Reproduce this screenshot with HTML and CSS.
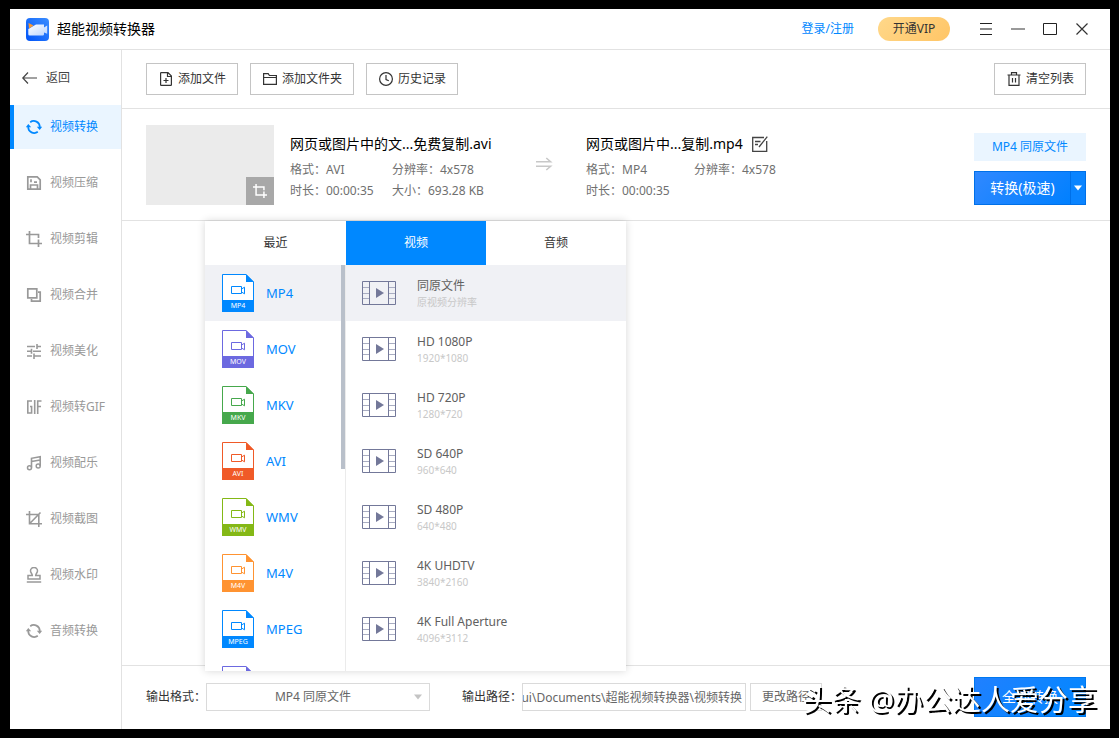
FILE: index.html
```html
<!DOCTYPE html>
<html lang="zh-CN">
<head>
<meta charset="utf-8">
<title>超能视频转换器</title>
<link rel="stylesheet" href="styles.css">
</head>
<body>
<svg class="sprite" aria-hidden="true">
  <symbol id="sync" viewBox="0 0 16 16"><path d="M4.200 3.200A6 6 0 0 1 13.800 8M11.800 12.800A6 6 0 0 1 2.200 8" fill="none" stroke="currentColor" stroke-width="1.700"/><path d="M-.2 8.200 2.300 5l2.900 3.200zM10.800 7.800h5.400L13.700 11z" fill="currentColor"/></symbol>
  <symbol id="save" viewBox="0 0 16 16"><path d="M1.800 1.800h9.400l3 3v9.400H1.800zM4.500 14v-4h7v4M5 4.300v3M8 7.200h3" fill="none" stroke="currentColor" stroke-width="1.700"/></symbol>
  <symbol id="crop" viewBox="0 0 16 16"><path d="M3.500 0v12.500H16M0 3.500h12.500V7M12.500 8.500V16" fill="none" stroke="currentColor" stroke-width="1.700"/></symbol>
  <symbol id="merge" viewBox="0 0 16 16"><path d="M1.800 1.800h9v9h-9zM12 5.200h2.200v9H5.500V12" fill="none" stroke="currentColor" stroke-width="1.700"/></symbol>
  <symbol id="tune" viewBox="0 0 16 16"><path d="M1 3.500h8M11 3.500h4M11 1v5M1 8.300h4M5.500 5.800v5M7 8.300h8M1 13h5M8 10.500V16M8 13h7" fill="none" stroke="currentColor" stroke-width="1.600"/></symbol>
  <symbol id="gif" viewBox="0 0 16 16"><path d="M6 2H1.800v12h3.800V7.500H4M8.700 1v14M11.700 15V2H15.500M11.700 7.500H15" fill="none" stroke="currentColor" stroke-width="1.600"/></symbol>
  <symbol id="music" viewBox="0 0 16 16"><path d="M5.500 12.500V3.300L14.200 1.800V11M5.500 6.500 14.200 5" fill="none" stroke="currentColor" stroke-width="1.600"/><circle cx="3.500" cy="12.700" r="2" fill="none" stroke="currentColor" stroke-width="1.500"/><circle cx="12.200" cy="11" r="2" fill="none" stroke="currentColor" stroke-width="1.500"/></symbol>
  <symbol id="snap" viewBox="0 0 16 16"><path d="M3.500 0v12.800H16M0 3.500h12.800V16M3.500 12.800 14.500 1.500" fill="none" stroke="currentColor" stroke-width="1.600"/></symbol>
  <symbol id="stamp" viewBox="0 0 16 16"><path d="M6.300 8.500C6.300 6.500 4.500 6 4.500 3.800a3.500 3.300 0 0 1 7 0C11.500 6 9.700 6.500 9.700 8.500H14v3.500H2V8.500zM.8 15h14.400" fill="none" stroke="currentColor" stroke-width="1.500"/></symbol>
  <symbol id="film" viewBox="0 0 34 24"><path d="M.5.5h33v23H.5zM7.500.5v23M26.500.5v23" fill="none" stroke="#737899"/><path d="M1 6.500h6M1 12.500h6M1 17.500h6M27 6.500h6M27 12.500h6M27 17.500h6" stroke="#a9adc2"/><path d="M14 7v10l8-5z" fill="#737899"/></symbol>
  <symbol id="doc" viewBox="0 0 32 38"><path d="M.5.5H24L31.500 8v29.500H.5z" fill="#fff" stroke="currentColor"/><path d="M24 0v8h8zM0 26h32v12H0z" fill="currentColor"/><path d="M9.500 12.500h10v7h-10zM19.500 15l3-1.800v6.600l-3-1.800" fill="none" stroke="currentColor"/></symbol>
</svg>

<div class="window">
  <header class="titlebar">
    <svg class="logo" viewBox="0 0 23 23"><defs><linearGradient id="lg" x1="1" y1="0" x2="0" y2="1"><stop offset="0" stop-color="#3b8dff"/><stop offset="1" stop-color="#0054f8"/></linearGradient><linearGradient id="cam" x1="0" y1="0" x2="1" y2="1"><stop offset="0" stop-color="#fff"/><stop offset="1" stop-color="#b9d4ff"/></linearGradient></defs><rect width="23" height="23" rx="4" fill="url(#lg)"/><path d="M2.300 11 10 6.500h8v3l3.200-2v8.300L18 14.500v1.700q0 1.300-1.300 1.300H3.600q-1.300 0-1.300-1.300z" fill="url(#cam)"/><path d="M2.500 5 7.500 7.500 3 10.500z" fill="#ff9b2e"/></svg>
    <h1 class="app-name">超能视频转换器</h1>
    <a class="login" href="#login">登录/注册</a>
    <button class="vip" type="button">开通VIP</button>
    <div class="window-controls">
      <button type="button" aria-label="菜单"><svg viewBox="0 0 14 14"><path d="M1 1.500h12M1 12.500h12" stroke="#222"/><path d="M1 7h12" stroke="#888" stroke-width="2"/></svg></button>
      <button type="button" aria-label="最小化"><svg viewBox="0 0 14 14"><path d="M0 7h14" stroke="#999" stroke-width="2"/></svg></button>
      <button type="button" aria-label="最大化"><svg viewBox="0 0 14 14"><path d="M.5 1.500h13v11H.5z" fill="none" stroke="#222"/></svg></button>
      <button type="button" aria-label="关闭"><svg viewBox="0 0 14 14"><path d="M1.500 1.500l11 11M12.500 1.500l-11 11" stroke="#333" stroke-width="1.200"/></svg></button>
    </div>
  </header>

  <div class="body">
    <nav class="sidebar">
      <a class="back" href="#back"><svg viewBox="0 0 16 16"><path d="M15 8H.8M6 2.500.8 8 6 13.500" fill="none" stroke="#444" stroke-width="1.200"/></svg>返回</a>
      <a class="nav-item active" href="#convert"><svg><use href="#sync"/></svg>视频转换</a>
      <a class="nav-item" href="#compress"><svg><use href="#save"/></svg>视频压缩</a>
      <a class="nav-item" href="#cut"><svg><use href="#crop"/></svg>视频剪辑</a>
      <a class="nav-item" href="#merge-video"><svg><use href="#merge"/></svg>视频合并</a>
      <a class="nav-item" href="#beautify"><svg><use href="#tune"/></svg>视频美化</a>
      <a class="nav-item" href="#to-gif"><svg><use href="#gif"/></svg>视频转GIF</a>
      <a class="nav-item" href="#soundtrack"><svg><use href="#music"/></svg>视频配乐</a>
      <a class="nav-item" href="#screenshot"><svg><use href="#snap"/></svg>视频截图</a>
      <a class="nav-item" href="#watermark"><svg><use href="#stamp"/></svg>视频水印</a>
      <a class="nav-item" href="#audio"><svg><use href="#sync"/></svg>音频转换</a>
    </nav>

    <main class="workspace">
      <div class="toolbar">
        <button class="tool" type="button"><svg viewBox="0 0 14 14"><path d="M9 .6H2.200q-.6 0-.6.6v11.600q0 .6.6.6h9.600q.6 0 .6-.6V4zM8.500.6V4.500h4M7 6v5M4.500 8.500h5" fill="none" stroke="#333" stroke-width="1.200"/></svg>添加文件</button>
        <button class="tool" type="button"><svg viewBox="0 0 14 14"><path d="M.6 12.400V1.600h4.600l1.200 1.900h7v8.900zM.6 5.500h12.800" fill="none" stroke="#333" stroke-width="1.200"/></svg>添加文件夹</button>
        <button class="tool" type="button"><svg viewBox="0 0 14 14"><circle cx="7" cy="7" r="6.400" fill="none" stroke="#333" stroke-width="1.200"/><path d="M7 3v4.500l2.800 1.200" fill="none" stroke="#333" stroke-width="1.200"/></svg>历史记录</button>
        <button class="tool clear" type="button"><svg viewBox="0 0 14 14"><path d="M.5 3h13M4.500 3V.7h5V3M2 3v10.400h10V3M5.500 6v4.500M8.500 6v4.500" fill="none" stroke="#333" stroke-width="1.200"/></svg>清空列表</button>
      </div>

      <article class="file">
        <div class="thumb"><button class="thumb-crop" type="button" aria-label="裁剪"><svg><use href="#crop"/></svg></button></div>
        <div class="info source">
          <h2>网页或图片中的文...免费复制.avi</h2>
          <div class="meta"><span>格式：AVI</span><span>分辨率：4x578</span><span>时长：00:00:35</span><span>大小：693.28 KB</span></div>
        </div>
        <svg class="arrow" viewBox="0 0 16 14"><path d="M0 4.700h14.500L10.300 1M0 9.300h14.500L10.300 13" fill="none" stroke="#c8c8c8" stroke-width="1.600"/></svg>
        <div class="info output">
          <h2>网页或图片中...复制.mp4 <button class="edit" type="button" aria-label="编辑"><svg viewBox="0 0 16 16"><path d="M12 1.500H.7v13.800h14V5M3 5.500h5.500M3 8.500h3M15.300.7 7 11" fill="none" stroke="#444" stroke-width="1.300"/></svg></button></h2>
          <div class="meta"><span>格式：MP4</span><span>分辨率：4x578</span><span>时长：00:00:35</span></div>
        </div>
        <div class="actions">
          <button class="preset" type="button">MP4 同原文件</button>
          <div class="split"><button class="convert" type="button">转换(极速)</button><button class="more" type="button" aria-label="更多"><svg viewBox="0 0 8 6"><path d="M0 .5h8L4 5.500z" fill="#fff"/></svg></button></div>
        </div>
      </article>

      <div class="list-space"></div>

      <footer class="footer">
        <label for="format">输出格式：</label>
        <div class="select-wrap"><select id="format"><option>MP4 同原文件</option></select><svg viewBox="0 0 8 6"><path d="M0 .5h8L4 5.500z" fill="#c4c4c4"/></svg></div>
        <label class="path-label" for="path">输出路径：</label>
        <input id="path" type="text" value="ui\Documents\超能视频转换器\视频转换">
        <button class="change" type="button">更改路径</button>
        <button class="convert-all" type="button">全部转换</button>
      </footer>

      <section class="picker" aria-label="输出格式选择">
        <div class="tabs"><button type="button">最近</button><button class="selected" type="button">视频</button><button type="button">音频</button></div>
        <div class="columns">
          <div class="formats">
            <button class="format on mp4" type="button"><span class="doc"><svg><use href="#doc"/></svg><small>MP4</small></span>MP4</button>
            <button class="format mov" type="button"><span class="doc"><svg><use href="#doc"/></svg><small>MOV</small></span>MOV</button>
            <button class="format mkv" type="button"><span class="doc"><svg><use href="#doc"/></svg><small>MKV</small></span>MKV</button>
            <button class="format avi" type="button"><span class="doc"><svg><use href="#doc"/></svg><small>AVI</small></span>AVI</button>
            <button class="format wmv" type="button"><span class="doc"><svg><use href="#doc"/></svg><small>WMV</small></span>WMV</button>
            <button class="format m4v" type="button"><span class="doc"><svg><use href="#doc"/></svg><small>M4V</small></span>M4V</button>
            <button class="format mp4" type="button"><span class="doc"><svg><use href="#doc"/></svg><small>MPEG</small></span>MPEG</button>
            <button class="format mov" type="button" aria-label="更多格式"><span class="doc"><svg><use href="#doc"/></svg></span></button>
            <div class="scroll-thumb"></div>
          </div>
          <div class="presets">
            <button class="quality on" type="button"><svg><use href="#film"/></svg><span class="words">同原文件<small>原视频分辨率</small></span></button>
            <button class="quality" type="button"><svg><use href="#film"/></svg><span class="words">HD 1080P<small>1920*1080</small></span></button>
            <button class="quality" type="button"><svg><use href="#film"/></svg><span class="words">HD 720P<small>1280*720</small></span></button>
            <button class="quality" type="button"><svg><use href="#film"/></svg><span class="words">SD 640P<small>960*640</small></span></button>
            <button class="quality" type="button"><svg><use href="#film"/></svg><span class="words">SD 480P<small>640*480</small></span></button>
            <button class="quality" type="button"><svg><use href="#film"/></svg><span class="words">4K UHDTV<small>3840*2160</small></span></button>
            <button class="quality" type="button"><svg><use href="#film"/></svg><span class="words">4K Full Aperture<small>4096*3112</small></span></button>
          </div>
        </div>
      </section>
    </main>
  </div>
</div>
<div class="stamp-text">头条 @办公达人爱分享</div>
</body>
</html>
```
FILE: styles.css
```css
* { box-sizing: border-box; }

body {
  margin: 0;
  height: 100vh;
  padding: 9px 9px 9px 10px;
  background: #000;
  color: #333;
  font: 12px/20px "Noto Sans", "Noto Sans CJK SC", sans-serif;
}

button, input, select {
  font: inherit;
  color: inherit;
  margin: 0;
  padding: 0;
  border: 0;
  border-radius: 0;
  background: none;
}

a { text-decoration: none; }
svg { display: block; flex: none; overflow: visible; }
h1, h2 { margin: 0; font-weight: 400; }
.sprite { position: absolute; width: 0; height: 0; }

.window { display: flex; flex-direction: column; height: 100%; background: #fff; }

.titlebar {
  display: flex;
  align-items: center;
  height: 41px;
  padding: 0 21px 0 16px;
  border-bottom: 1px solid #e2e2e2;
}
.logo { width: 23px; height: 23px; margin-right: 8px; }
.app-name { font-size: 14px; color: #000; margin-right: auto; }
.login { color: #0088ff; margin-right: 24px; }
.vip {
  width: 72px;
  height: 24px;
  margin-right: 29px;
  border-radius: 12px;
  background: linear-gradient(135deg, #ffd88a, #ffc566);
}
.window-controls { display: flex; gap: 18px; }
.window-controls svg { width: 14px; height: 14px; }

.body { flex: 1; display: flex; min-height: 0; }

.sidebar {
  width: 112px;
  display: flex;
  flex-direction: column;
  gap: 12px;
  border-right: 1px solid #e2e2e2;
}
.sidebar svg { width: 16px; height: 16px; }
.back {
  display: flex;
  align-items: center;
  gap: 8px;
  height: 43px;
  padding: 12px 0 0 12px;
  color: #444;
}
.nav-item {
  display: flex;
  align-items: center;
  gap: 8px;
  height: 44px;
  padding-left: 12px;
  border-left: 4px solid transparent;
  color: #999;
}
.nav-item.active { background: #eaf5ff; border-left-color: #0088ff; color: #0088ff; }

.workspace { position: relative; flex: 1; display: flex; flex-direction: column; min-width: 0; }

.toolbar {
  display: flex;
  gap: 12px;
  padding: 13px 24px;
  border-bottom: 1px solid #e2e2e2;
}
.tool {
  display: flex;
  align-items: center;
  gap: 5px;
  height: 32px;
  padding: 0 11px 0 12px;
  border: 1px solid #c4c4c4;
  background: #fff;
}
.tool svg { width: 14px; height: 14px; }
.clear { margin-left: auto; }

.file {
  display: flex;
  padding: 16px 24px 15px;
  border-bottom: 1px solid #e2e2e2;
}
.thumb {
  display: flex;
  align-items: flex-end;
  justify-content: flex-end;
  width: 128px;
  height: 80px;
  margin-right: 16px;
  background: #ebebeb;
}
.thumb-crop { display: grid; place-items: center; width: 28px; height: 28px; background: #a8a8a8; color: #fff; }
.thumb-crop svg { width: 14px; height: 14px; }
.info { padding-top: 7px; }
.info h2 { display: flex; align-items: center; font-size: 14px; line-height: 24px; margin-bottom: 3px; color: #000; }
.source { width: 246px; }
.meta { display: grid; grid-template-columns: 102px auto; justify-content: start; color: #707070; }
.output .meta { grid-template-columns: 108px auto; }
.meta span { line-height: 21px; }
.arrow { width: 16px; height: 14px; margin: 32px 34px 0 0; }
.edit { margin-left: 9px; }
.edit svg { width: 16px; height: 16px; }
.actions { width: 112px; margin-left: auto; padding-top: 8px; }
.preset { display: block; width: 100%; height: 28px; margin-bottom: 10px; background: #eaf5ff; color: #0088ff; }
.split { display: flex; height: 34px; color: #fff; }
.convert { flex: 1; border: 1px solid #0070e8; background: linear-gradient(135deg, #3088ff, #0080ff); font-size: 14px; }
.more { display: grid; place-items: center; width: 15px; border: 1px solid #0070e8; border-left: 0; background: #0a84ff; }
.more svg { width: 8px; height: 6px; }

.list-space { flex: 1; }

.footer {
  display: flex;
  align-items: center;
  height: 64px;
  padding: 0 24px 1px;
  border-top: 1px solid #e2e2e2;
}
.footer label { width: 60px; flex: none; }
.footer .path-label { margin-left: 32px; }
.select-wrap { position: relative; width: 224px; }
.select-wrap select {
  display: block;
  width: 100%;
  height: 28px;
  padding-right: 10px;
  border: 1px solid #dadada;
  appearance: none;
  text-align-last: center;
  color: #666;
}
.select-wrap svg { position: absolute; right: 8px; top: 11px; width: 8px; height: 6px; pointer-events: none; }
.footer input { width: 224px; height: 28px; padding-right: 3px; border: 1px solid #dadada; color: #666; direction: rtl; }
.change { width: 72px; height: 28px; margin-left: 4px; border: 1px solid #dadada; color: #666; }
.convert-all { width: 112px; height: 40px; margin-left: auto; background: linear-gradient(135deg, #2080ff, #0088ff); border: 1px solid #0078f0; color: #fff; font-size: 14px; }

.picker {
  position: absolute;
  left: 83px;
  top: 171px;
  bottom: 58px;
  width: 421px;
  display: flex;
  flex-direction: column;
  background: #fff;
  box-shadow: 0 0 8px rgba(0, 0, 0, 0.16);
}
.tabs { display: grid; grid-template-columns: 141px 140px 140px; height: 44px; }
.tabs .selected { background: #0088ff; color: #fff; }
.columns { flex: 1; display: flex; min-height: 0; overflow: hidden; }
.formats { position: relative; width: 141px; border-right: 1px solid #ebebeb; }
.format {
  display: flex;
  align-items: center;
  gap: 12px;
  width: 100%;
  height: 56px;
  padding-left: 17px;
  font-size: 13px;
  text-align: left;
}
.doc { position: relative; width: 32px; height: 38px; }
.doc svg { width: 32px; height: 38px; }
.doc small { position: absolute; left: 0; right: 0; bottom: 0; font-size: 7px; line-height: 12px; text-align: center; color: #fff; }
.format { color: #0088ff; }
.mp4 .doc { color: #0088ff; }
.mov .doc { color: #6c69e0; }
.mkv .doc { color: #46a84c; }
.avi .doc { color: #f05a28; }
.wmv .doc { color: #84b816; }
.m4v .doc { color: #ff9331; }
.on { background: #f0f1f5; }
.scroll-thumb { position: absolute; top: 0; right: 0; width: 4px; height: 204px; background: #b9c0ca; }
.presets { flex: 1; }
.quality {
  display: flex;
  align-items: center;
  gap: 21px;
  width: 100%;
  height: 56px;
  padding-left: 16px;
  text-align: left;
  color: #606060;
}
.quality svg { width: 34px; height: 24px; }
.words { display: flex; flex-direction: column; line-height: 18px; }
.words small { font-size: 10px; line-height: 15px; color: #c8c8c8; }

.stamp-text {
  position: fixed;
  right: 22px;
  bottom: 18px;
  font-size: 29px;
  line-height: 40px;
  color: #fff;
  text-shadow: 2px 2px 0 #000;
  white-space: nowrap;
  pointer-events: none;
}
```
